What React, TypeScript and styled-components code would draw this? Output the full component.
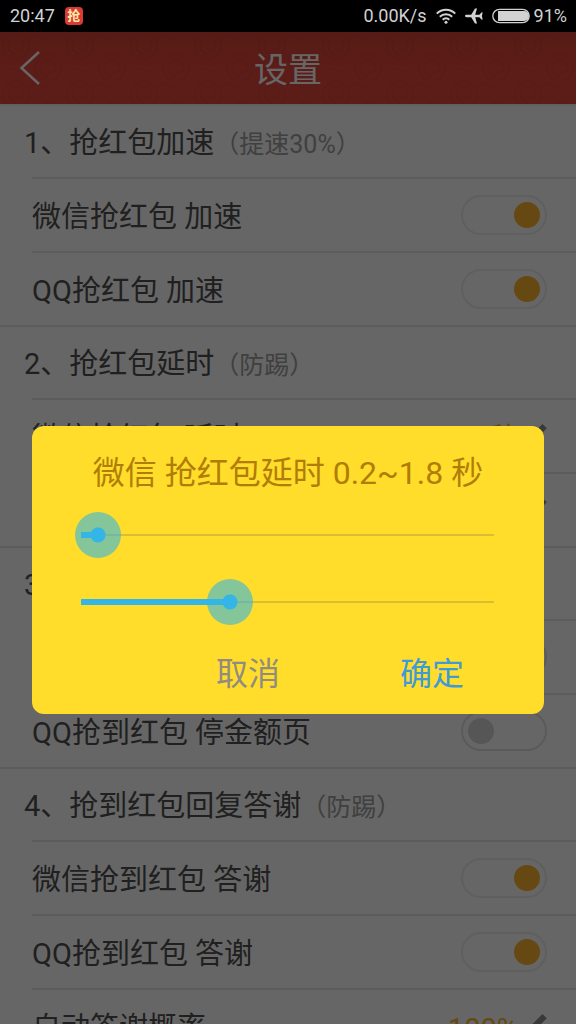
import React, { useState } from "react";
import styled, { createGlobalStyle } from "styled-components";

const GlobalStyle = createGlobalStyle`
  * { box-sizing: border-box; }
  body {
    margin: 0;
    background: #fff;
    font-family: Roboto, "Noto Sans CJK SC", sans-serif;
  }
  button, input { font: inherit; }
`;

const Screen = styled.div`
  display: flex;
  flex-direction: column;
  height: 100vh;
  overflow: hidden;
`;

const StatusBar = styled.div`
  display: flex;
  align-items: center;
  flex: none;
  height: 32px;
  padding: 0 9px 0 10px;
  background: #000;
  color: #d2d2d2;
  font-size: 18px;
  line-height: 32px;
`;

const AppBadge = styled.span`
  display: flex;
  align-items: center;
  justify-content: center;
  width: 18px;
  height: 18px;
  margin-left: 10px;
  border-radius: 4px;
  background: #d93a35;
  color: #ffe9a8;
  font-size: 13px;
  font-weight: 700;
  line-height: 18px;
`;

const StatusIcons = styled.div`
  display: flex;
  align-items: center;
  margin-left: auto;
  gap: 9px;
`;

const BatteryLevel = styled.span`
  margin-left: 4px;
`;

const AppArea = styled.div`
  position: relative;
  display: flex;
  flex-direction: column;
  flex: 1;
  min-height: 0;
`;

const Header = styled.header`
  position: relative;
  display: grid;
  grid-template-columns: 72px 1fr 72px;
  align-items: center;
  flex: none;
  height: 74px;
  border-bottom: 2px solid #f2f0f6;
  background: linear-gradient(#d9453a, #e6483c 50%, #e6483c);
`;

const HeaderPattern = styled.svg`
  position: absolute;
  inset: 0;
  width: 100%;
  height: 100%;
`;

const BackButton = styled.button`
  position: relative;
  display: flex;
  align-items: center;
  height: 72px;
  padding: 0 0 0 18px;
  border: 0;
  background: none;
`;

const Title = styled.h1`
  position: relative;
  margin: 0;
  padding-top: 4px;
  color: #fff;
  font-size: 34px;
  font-weight: 400;
  line-height: 68px;
  text-align: center;
`;

const List = styled.main`
  flex: 1;
  min-height: 0;
  overflow-y: auto;
  scrollbar-width: none;
`;

const Section = styled.section`
  border-bottom: 2px solid #e7e7e7;
`;

const SectionTitle = styled.h2`
  height: 71px;
  margin: 0;
  padding: 2px 0 0 24px;
  color: #505050;
  font-size: 29px;
  font-weight: 400;
  line-height: 70px;
`;

const Hint = styled.span`
  color: #a0a0a0;
  font-size: 25px;
`;

const Row = styled.div`
  display: flex;
  align-items: center;
  justify-content: space-between;
  height: 74px;
  margin-left: 32px;
  padding-right: 29px;
  border-top: 2px solid #e7e7e7;
  color: #505050;
  font-size: 29px;
  line-height: 68px;
`;

const RowLabel = styled.label`
  padding-top: 4px;
`;

const Switch = styled.input`
  appearance: none;
  display: flex;
  align-items: center;
  width: 86px;
  height: 40px;
  margin: 0;
  padding: 0 5px;
  border: 2px solid #ededf0;
  border-radius: 20px;
  background: #fff;

  &::before {
    content: "";
    width: 26px;
    height: 26px;
    border-radius: 50%;
    background: #d8d8d8;
  }
  &:not(:checked) { border-color: #e2e2e2; }
  &:checked { justify-content: flex-end; }
  &:checked::before { background: #ffb52e; }
`;

const EditButton = styled.button`
  display: flex;
  align-items: center;
  gap: 5px;
  padding: 0;
  border: 0;
  background: none;
  color: #ffb52e;
  font-size: 29px;
  line-height: 40px;
`;

const EditValue = styled.span`
  padding-top: 6px;
`;

const Backdrop = styled.div`
  position: absolute;
  inset: 0;
  display: flex;
  align-items: center;
  padding: 84px 32px 0;
  background: rgba(0, 0, 0, 0.6);
`;

const Dialog = styled.div`
  width: 100%;
  padding: 18px 20px 16px;
  border-radius: 12px;
  background: #ffdd2a;
`;

const DialogTitle = styled.h2`
  margin: 0;
  color: #b07d08;
  font-size: 32px;
  font-weight: 400;
  line-height: 58px;
  text-align: center;
`;

const Sliders = styled.div`
  display: flex;
  flex-direction: column;
  gap: 21px;
  padding: 10px 7px 0 6px;
`;

const Slider = styled.input`
  appearance: none;
  display: block;
  width: 100%;
  height: 46px;
  margin: 0;
  background:
    linear-gradient(#33b5e5, #33b5e5) 23px center / calc((100% - 46px) * var(--level)) 6px no-repeat,
    linear-gradient(#d9be33, #d9be33) 23px center / calc(100% - 46px) 2px no-repeat;

  &::-webkit-slider-thumb {
    appearance: none;
    width: 46px;
    height: 46px;
    border-radius: 50%;
    background: radial-gradient(circle, #33b5e5 7px, rgba(51, 181, 229, 0.6) 8px);
  }
`;

const Actions = styled.div`
  display: flex;
  justify-content: flex-end;
  margin-top: 25px;
`;

const ActionButton = styled.button<{ $primary?: boolean }>`
  width: 184px;
  padding: 0;
  border: 0;
  background: none;
  color: ${(p) => (p.$primary ? "#3f9ad6" : "#918b80")};
  font-size: 32px;
  line-height: 48px;
`;

const WifiIcon = () => (
  <svg width="20" height="16" viewBox="0 0 20 16" fill="none" stroke="#d2d2d2" strokeWidth="2" aria-hidden="true">
    <path d="M.8 5.6a13 13 0 0 1 18.4 0M3.8 8.8a8.8 8.8 0 0 1 12.4 0M6.7 11.7a4.7 4.7 0 0 1 6.6 0" />
    <circle cx="10" cy="14.2" r="1.5" fill="#d2d2d2" stroke="none" />
  </svg>
);

const PlaneIcon = () => (
  <svg width="18" height="16" viewBox="0 0 18 16" fill="#d2d2d2" aria-hidden="true">
    <path d="M0 8c0-.7.7-1.200 1.500-1.200h4.700L10 .5h2L10.200 6.800h4.300L16.300 4.600h1.400L16.900 8l.8 3.400h-1.400L14.500 9.200h-4.300L12 15.500h-2L6.200 9.200H1.500C.7 9.200 0 8.700 0 8z" />
  </svg>
);

const BatteryIcon = () => (
  <svg width="38" height="16" viewBox="0 0 38 16" aria-hidden="true">
    <rect x=".8" y="1.300" width="36.400" height="13.400" rx="6.700" fill="none" stroke="#d2d2d2" strokeWidth="1.300" />
    <path d="M6 3h26a5 5 0 0 1 0 10H6z" fill="#d2d2d2" />
  </svg>
);

const PencilIcon = () => (
  <svg width="24" height="24" viewBox="0 0 24 24" fill="#8f8f8f" aria-hidden="true">
    <path d="M19.500 0 23.800 4.300 7.500 20.600 3.200 16.300zM2.400 17.500l3.900 3.900L1 23z" />
  </svg>
);

type Item = { label: string; on?: boolean; value?: string };
type Group = { title: string; hint?: string; items: Item[] };

const groups: Group[] = [
  {
    title: "1、抢红包加速",
    hint: "（提速30%）",
    items: [
      { label: "微信抢红包 加速", on: true },
      { label: "QQ抢红包 加速", on: true },
    ],
  },
  {
    title: "2、抢红包延时",
    hint: "（防踢）",
    items: [
      { label: "微信抢红包 延时", value: "0.2~1.8秒" },
      { label: "QQ抢红包 延时", value: "0.2~1.8秒" },
    ],
  },
  {
    title: "3、抢到红包停留",
    items: [
      { label: "微信抢到红包 停金额页", on: false },
      { label: "QQ抢到红包 停金额页", on: false },
    ],
  },
  {
    title: "4、抢到红包回复答谢",
    hint: "（防踢）",
    items: [
      { label: "微信抢到红包 答谢", on: true },
      { label: "QQ抢到红包 答谢", on: true },
      { label: "自动答谢概率", value: "100%" },
    ],
  },
];

const MAX_DELAY = 5;

function SettingRow({ item, id }: { item: Item; id: string }) {
  return (
    <Row>
      <RowLabel htmlFor={id}>{item.label}</RowLabel>
      {item.value ? (
        <EditButton id={id} type="button">
          <EditValue>{item.value}</EditValue>
          <PencilIcon />
        </EditButton>
      ) : (
        <Switch id={id} type="checkbox" defaultChecked={item.on} />
      )}
    </Row>
  );
}

function DelaySlider(props: { label: string; value: number; onChange: (v: number) => void }) {
  return (
    <Slider
      type="range"
      aria-label={props.label}
      min={0}
      max={MAX_DELAY}
      step={0.1}
      value={props.value}
      onChange={(e) => props.onChange(Number(e.target.value))}
      style={{ "--level": props.value / MAX_DELAY } as React.CSSProperties}
    />
  );
}

export default function App() {
  const [low, setLow] = useState(0.2);
  const [high, setHigh] = useState(1.8);

  return (
    <Screen>
      <GlobalStyle />
      <StatusBar>
        <span>20:47</span>
        <AppBadge>抢</AppBadge>
        <StatusIcons>
          <span>0.00K/s</span>
          <WifiIcon />
          <PlaneIcon />
          <BatteryIcon />
        </StatusIcons>
        <BatteryLevel>91%</BatteryLevel>
      </StatusBar>
      <AppArea>
        <Header>
          <HeaderPattern aria-hidden="true">
            <defs>
              <pattern id="swirls" width="64" height="48" patternUnits="userSpaceOnUse">
                <g fill="none" stroke="#c93c31" strokeOpacity="0.35" strokeWidth="1.500">
                  <circle cx="16" cy="14" r="13" />
                  <path d="M16 22a8 8 0 1 1 8-8 5 5 0 0 1-9 2" />
                  <circle cx="48" cy="36" r="13" />
                  <path d="M48 44a8 8 0 1 1 8-8 5 5 0 0 1-9 2" />
                  <path d="M30 6c8-6 14 4 22 2M2 38c8-6 14 4 22 2" />
                </g>
              </pattern>
            </defs>
            <rect width="100%" height="100%" fill="url(#swirls)" />
          </HeaderPattern>
          <BackButton type="button" aria-label="返回">
            <svg width="24" height="36" viewBox="0 0 24 36" fill="none" stroke="#fff" strokeWidth="2.500">
              <path d="M21 2 3.500 18 21 34" />
            </svg>
          </BackButton>
          <Title>设置</Title>
        </Header>
        <List>
          {groups.map((group, g) => (
            <Section key={group.title}>
              <SectionTitle>
                {group.title}
                {group.hint && <Hint>{group.hint}</Hint>}
              </SectionTitle>
              {group.items.map((item, i) => (
                <SettingRow key={item.label} item={item} id={`setting-${g}-${i}`} />
              ))}
            </Section>
          ))}
        </List>
        <Backdrop>
          <Dialog role="dialog" aria-modal="true" aria-labelledby="dialog-title">
            <DialogTitle id="dialog-title">
              {`微信 抢红包延时 ${low.toFixed(1)}~${high.toFixed(1)} 秒`}
            </DialogTitle>
            <Sliders>
              <DelaySlider label="最短延时" value={low} onChange={setLow} />
              <DelaySlider label="最长延时" value={high} onChange={setHigh} />
            </Sliders>
            <Actions>
              <ActionButton type="button">取消</ActionButton>
              <ActionButton type="button" $primary>
                确定
              </ActionButton>
            </Actions>
          </Dialog>
        </Backdrop>
      </AppArea>
    </Screen>
  );
}
